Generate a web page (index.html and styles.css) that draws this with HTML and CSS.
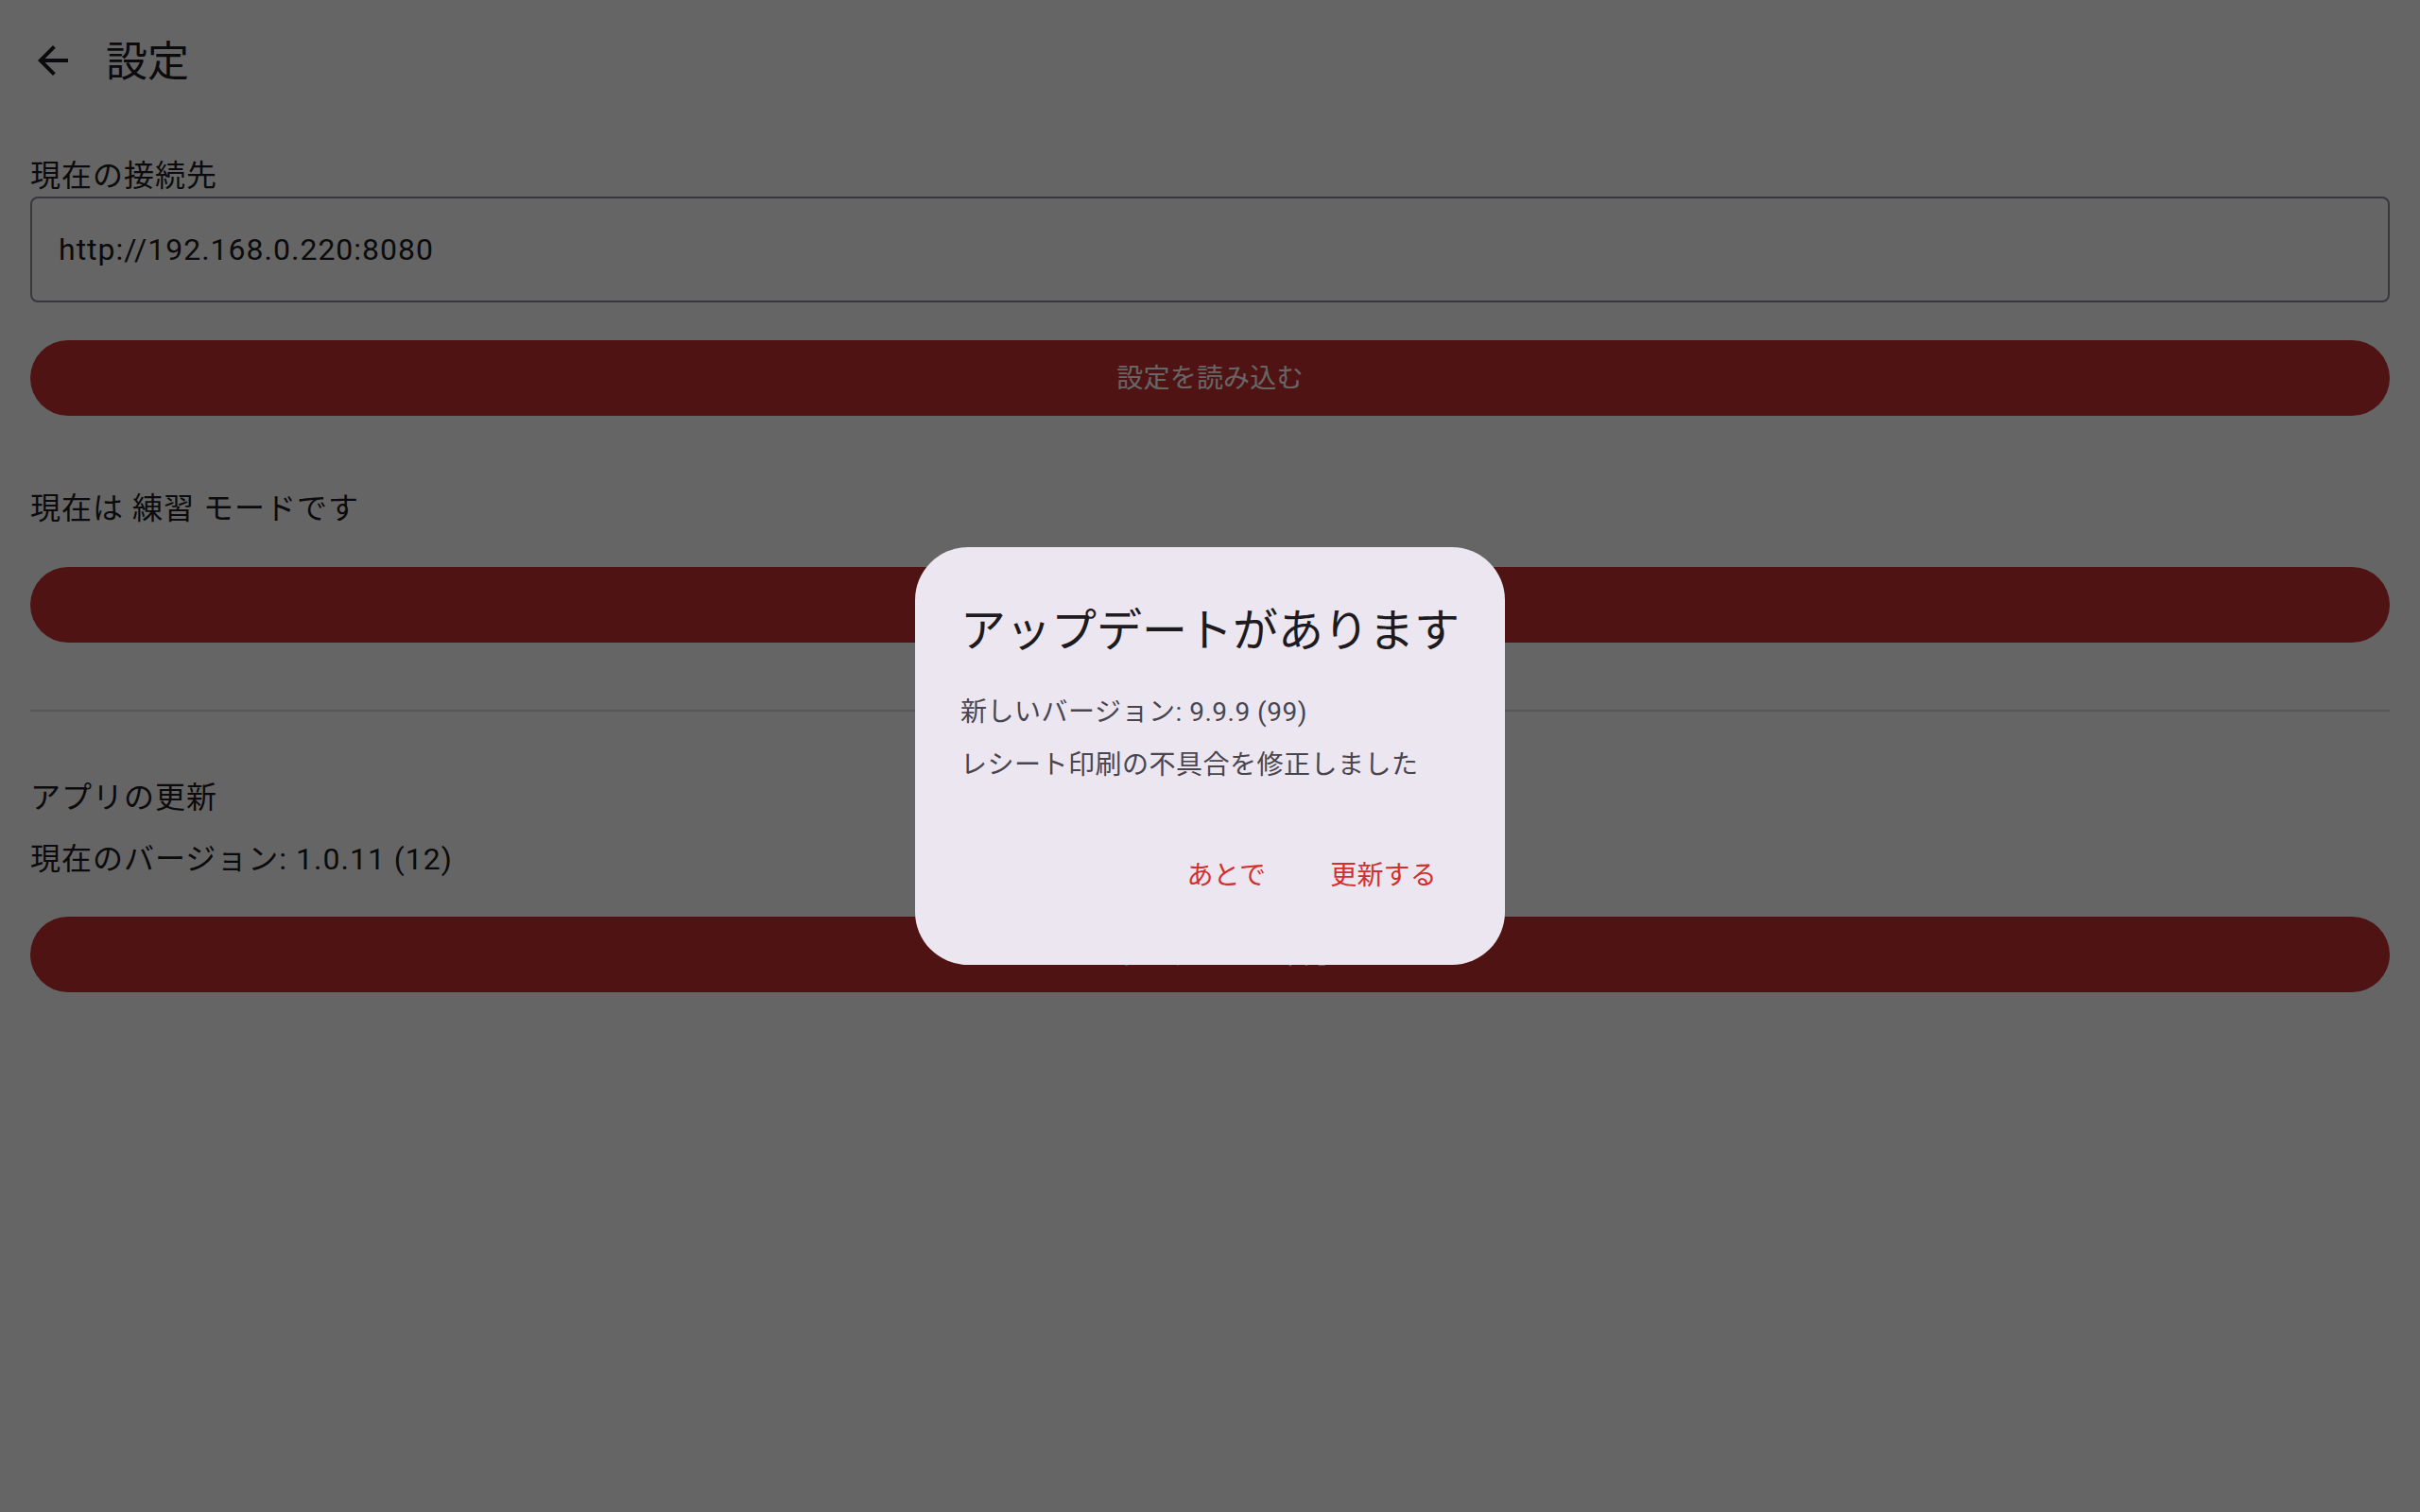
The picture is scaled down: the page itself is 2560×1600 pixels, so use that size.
FILE: index.html
```html
<!DOCTYPE html>
<html lang="ja">
<head>
<meta charset="utf-8">
<title>設定</title>
<link rel="stylesheet" href="styles.css">
</head>
<body>
<div class="screen">
  <header class="appbar">
    <div class="back">
      <svg viewBox="0 0 24 24" width="48" height="48"><path d="M20 11H7.83l5.59-5.59L12 4l-8 8 8 8 1.41-1.41L7.83 13H20v-2z" fill="currentColor"/></svg>
    </div>
    <h1 class="title">設定</h1>
  </header>
  <main class="content">
    <div class="label first">現在の接続先</div>
    <div class="field"><span class="field-text">http://192.168.0.220:8080</span></div>
    <div class="btn btn-load">設定を読み込む</div>
    <div class="label mode">現在は 練習 モードです</div>
    <div class="btn btn-mode">本番モードに切り替える</div>
    <div class="divider"></div>
    <div class="label section">アプリの更新</div>
    <div class="label version">現在のバージョン: 1.0.11 (12)</div>
    <div class="btn btn-update">アップデートを確認</div>
  </main>
</div>
<div class="scrim">
  <div class="dialog">
    <div class="dialog-title">アップデートがあります</div>
    <div class="dialog-body">
      <div class="body-line">新しいバージョン: 9.9.9 (99)</div>
      <div class="body-line second">レシート印刷の不具合を修正しました</div>
    </div>
    <div class="actions">
      <div class="text-btn">あとで</div>
      <div class="text-btn">更新する</div>
    </div>
  </div>
</div>
</body>
</html>
```
FILE: styles.css
```css
html, body {
  margin: 0;
  padding: 0;
}
body {
  width: 2560px;
  height: 1600px;
  background: #fcfcfc;
  font-family: Roboto, "Noto Sans CJK JP", sans-serif;
  color: #1d1b20;
  overflow: hidden;
}
.screen {
  width: 2560px;
  height: 1600px;
  display: flex;
  flex-direction: column;
}
.appbar {
  height: 128px;
  display: flex;
  align-items: center;
  padding-left: 32px;
}
.back {
  width: 48px;
  height: 48px;
  display: flex;
  color: #1d1b20;
}
.title {
  margin: 0 0 0 32px;
  padding-top: 4px;
  font-size: 44px;
  line-height: 56px;
  font-weight: 400;
}
.content {
  display: flex;
  flex-direction: column;
  padding: 0 32px;
}
.label {
  font-size: 32px;
  line-height: 44px;
  letter-spacing: 1px;
}
.label.first { margin-top: 36px; }
.label.mode { margin-top: 76px; }
.label.section { margin-top: 69px; }
.label.version { margin-top: 21px; }
.field {
  box-sizing: border-box;
  height: 112px;
  border: 2px solid #8e8a96;
  border-radius: 8px;
  display: flex;
  align-items: center;
  padding-left: 28px;
}
.field-text {
  font-family: Roboto, "Noto Sans CJK JP", sans-serif;
  font-size: 32px;
  line-height: 44px;
  letter-spacing: 1px;
}
.btn {
  box-sizing: border-box;
  height: 80px;
  padding-top: 2px;
  border-radius: 40px;
  background: #c83032;
  color: #ffffff;
  font-size: 28px;
  line-height: 78px;
  text-align: center;
  letter-spacing: 0.2px;
}
.btn-load { margin-top: 40px; }
.btn-mode { margin-top: 40px; }
.btn-update { margin-top: 39px; }
.divider {
  height: 2px;
  background: #d9d9d9;
  margin-top: 71px;
}
.scrim {
  position: fixed;
  inset: 0;
  background: rgba(0, 0, 0, 0.6);
  display: flex;
  align-items: center;
  justify-content: center;
}
.dialog {
  box-sizing: border-box;
  width: 624px;
  height: 442px;
  background: #ece6f0;
  border-radius: 56px;
  padding: 57px 48px 54px 48px;
  display: flex;
  flex-direction: column;
}
.dialog-title {
  font-size: 48px;
  line-height: 64px;
  color: #1d1b20;
}
.dialog-body {
  margin-top: 34px;
  display: flex;
  flex-direction: column;
  gap: 16px;
  color: #49454f;
}
.body-line {
  font-size: 28px;
  line-height: 40px;
  letter-spacing: 0.5px;
}
.actions {
  margin-top: 57px;
  display: flex;
  justify-content: flex-end;
  gap: 20px;
}
.text-btn {
  height: 80px;
  padding: 0 24px;
  font-size: 28px;
  line-height: 80px;
  color: #d32f2f;
  letter-spacing: 0.2px;
}
```
